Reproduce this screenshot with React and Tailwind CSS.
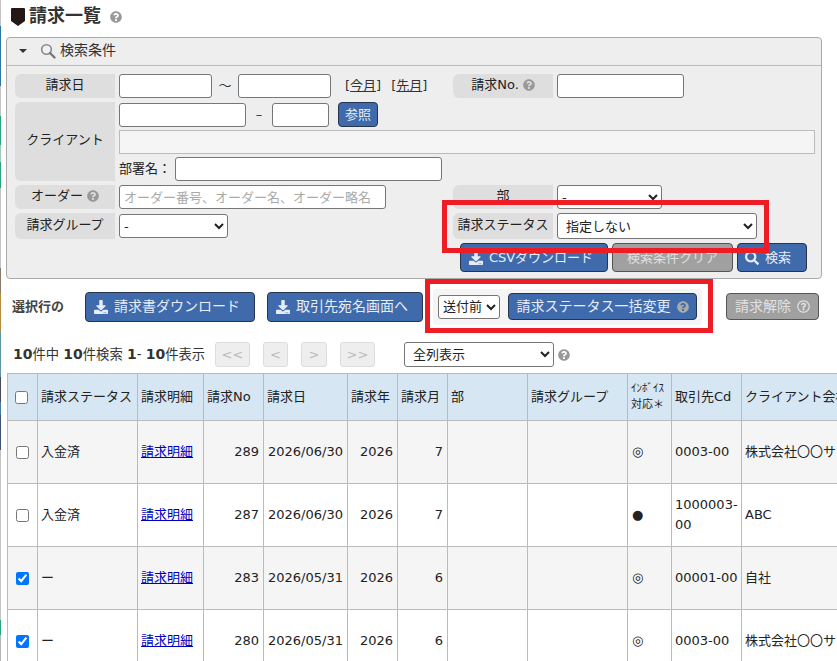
import { FaQuestionCircle, FaRegQuestionCircle, FaDownload, FaSearch } from 'react-icons/fa';

const FONT = "font-['DejaVu_Sans','Noto_Sans_CJK_JP',sans-serif]";

const STRIP = [
  ['h-[26px]', 'bg-[#c4c4c4]'],
  ['h-[60px]', 'bg-[#2b76a8]'],
  ['h-[30px]', 'bg-[#c4c4c4]'],
  ['h-[29px]', 'bg-[#2aa578]'],
  ['h-[17px]', 'bg-[#9fcdb8]'],
  ['h-[26px]', 'bg-[#2aa578]'],
  ['h-[80px]', 'bg-[#c4c4c4]'],
  ['h-[25px]', 'bg-[#8a7a6a]'],
  ['h-[39px]', 'bg-[#b58a3e]'],
  ['h-[45px]', 'bg-[#5f93a8]'],
  ['h-[25px]', 'bg-[#4a4a52]'],
  ['h-[13px]', 'bg-[#4a7ba0]'],
  ['h-[35px]', 'bg-[#3f5275]'],
  ['h-[170px]', 'bg-[#c4c4c4]'],
  ['h-[15px]', 'bg-[#2aa578]'],
  ['h-[26px]', 'bg-[#b4b4b4]'],
];

const COLS = [30, 100, 66, 60, 84, 50, 50, 80, 100, 44, 70, 200];

const ROWS = [
  { checked: false, status: '入金済', no: '289', date: '2026/06/30', year: '2026', month: '7', mark: '◎', cd: '0003-00', client: '株式会社〇〇サービス' },
  { checked: false, status: '入金済', no: '287', date: '2026/06/30', year: '2026', month: '7', mark: '●', cd: '1000003-00', client: 'ABC' },
  { checked: true, status: 'ー', no: '283', date: '2026/05/31', year: '2026', month: '6', mark: '◎', cd: '00001-00', client: '自社' },
  { checked: true, status: 'ー', no: '280', date: '2026/05/31', year: '2026', month: '6', mark: '◎', cd: '0003-00', client: '株式会社〇〇サービス' },
];

const Label = ({ className = 'h-[24px]', children }) => (
  <div className={`w-[100px] shrink-0 bg-[#dedede] rounded-l-[6px] flex items-center justify-center gap-1 pb-[3px] text-[13px] text-[#222] ${className}`}>
    {children}
  </div>
);

const Input = ({ className = '', disabled, ...props }) => (
  <input
    disabled={disabled}
    className={`h-[24px] border text-[13px] px-1 ${disabled ? 'bg-[#f5f5f5] border-[#bbbbbb]' : 'bg-white border-[#767676] rounded-[3px]'} ${className}`}
    {...props}
  />
);

const Select = ({ className = '', children }) => (
  <select className={`bg-white border border-[#767676] rounded-[3px] text-[13px] text-[#222] ${className}`}>
    {children}
  </select>
);

const Button = ({ gray, className = '', children }) => (
  <button className={`flex items-center justify-center gap-[6px] border rounded-[4px] ${gray ? 'bg-[#a0a0a0] border-[#555555] text-[#e0e0e0]' : 'bg-[#3f6aac] border-[#26344d] text-[#e6edf7]'} ${className}`}>
    {children}
  </button>
);

const PageButton = ({ className = '', children }) => (
  <button className={`h-[25px] bg-[#eeeeee] border border-[#dddddd] rounded-[3px] text-[#bbbbbb] text-[13px] ${className}`}>
    {children}
  </button>
);

const Th = ({ children }) => (
  <th className="border border-[#bbbbbb] pl-[3px] pr-1 font-normal text-left text-[13px] text-[#222]">{children}</th>
);

const Td = ({ className = 'pl-[3px] pr-[3px]', children }) => (
  <td className={`border border-[#bbbbbb] text-[13px] leading-[20px] text-[#222] ${className}`}>{children}</td>
);

const App = () => {
  return (
    <div className={`w-[837px] h-[661px] overflow-hidden flex bg-white ${FONT}`}>
      <div className="w-[1px] shrink-0 flex flex-col">
        {STRIP.map(([h, bg], i) => (
          <div key={i} className={`${h} ${bg}`} />
        ))}
      </div>

      <div className="relative flex-1 min-w-0">
        {/* title */}
        <div className="h-[37px] flex items-start pl-[10px] pt-[4px]">
          <svg width="14" height="18" viewBox="0 0 14 18" className="mt-[4px]">
            <path d="M1 0h12a1 1 0 0 1 1 1v12l-7 5-7-5V1a1 1 0 0 1 1-1z" fill="#231815" />
          </svg>
          <h1 className="ml-[4px] text-[18px] leading-[24px] font-bold text-[#333]">請求一覧</h1>
          <FaQuestionCircle className="ml-[9px] mt-[7px] text-[12px] text-[#999]" />
        </div>

        {/* search panel */}
        <div className="ml-[5px] w-[816px] h-[242px] border border-[#aaaaaa] rounded-[4px] bg-[#eeeeee]">
          <div className="h-[28px] flex items-center border-b border-[#bbbbbb] pl-[12px] pb-[2px]">
            <div className="w-0 h-0 border-x-[4px] border-x-transparent border-t-[4px] border-t-[#333]" />
            <svg width="16" height="16" viewBox="0 0 16 16" className="ml-[13px]">
              <circle cx="6.5" cy="6.5" r="4.8" fill="#eef2f4" stroke="#888" strokeWidth="1.6" />
              <path d="M10 10l4.5 4.5" stroke="#777" strokeWidth="2.4" strokeLinecap="round" />
            </svg>
            <span className="ml-[4px] text-[14px] text-[#333]">検索条件</span>
          </div>

          <div className="pl-[8px] pt-[8px] flex flex-col gap-[4px]">
            <div className="flex items-center">
              <div className="w-[438px] flex items-center">
                <Label>請求日</Label>
                <Input className="ml-[4px] w-[93px]" />
                <span className="w-[26px] text-center text-[13px] text-[#333]">～</span>
                <Input className="w-[93px]" />
                <span className="ml-[14px] text-[13px] text-[#333]">[<u>今月</u>]</span>
                <span className="ml-[10px] text-[13px] text-[#333]">[<u>先月</u>]</span>
              </div>
              <Label>
                請求No.
                <FaQuestionCircle className="text-[12px] text-[#999]" />
              </Label>
              <Input className="ml-[4px] w-[127px]" />
            </div>

            <div className="flex">
              <Label className="h-[79px]">クライアント</Label>
              <div className="ml-[4px] flex flex-col">
                <div className="flex items-center h-[25px]">
                  <Input className="w-[127px]" />
                  <span className="w-[26px] text-center text-[13px] text-[#333]">–</span>
                  <Input className="w-[57px]" />
                  <Button className="ml-[9px] w-[40px] h-[25px] text-[13px]">参照</Button>
                </div>
                <Input disabled className="mt-[3px] w-[696px]" />
                <div className="mt-[3px] flex items-center">
                  <span className="w-[56px] text-[13px] text-[#222]">部署名：</span>
                  <Input className="w-[267px]" />
                </div>
              </div>
            </div>

            <div className="flex items-center">
              <div className="w-[438px] flex items-center">
                <Label>
                  オーダー
                  <FaQuestionCircle className="text-[12px] text-[#999]" />
                </Label>
                <Input
                  className="ml-[4px] w-[267px] placeholder:text-[#aaaaaa]"
                  placeholder="オーダー番号、オーダー名、オーダー略名"
                />
              </div>
              <Label>部</Label>
              <Select className="ml-[4px] w-[105px] h-[24px]"><option>-</option></Select>
            </div>

            <div className="flex items-center">
              <div className="w-[438px] flex items-center">
                <Label className="h-[26px]">請求グループ</Label>
                <Select className="ml-[4px] w-[109px] h-[24px]"><option>-</option></Select>
              </div>
              <Label className="h-[26px]">請求ステータス</Label>
              <Select className="ml-[4px] w-[200px] h-[26px] pl-1"><option>指定しない</option></Select>
            </div>

            <div className="flex justify-end gap-[4px] pr-[14px]">
              <Button className="w-[148px] h-[29px] text-[13px] pr-[6px]">
                <FaDownload className="text-[14px]" />
                CSVダウンロード
              </Button>
              <Button gray className="w-[121px] h-[29px] text-[13px]">検索条件クリア</Button>
              <Button className="w-[70px] h-[29px] text-[13px] pr-[8px]">
                <FaSearch className="text-[14px]" />
                検索
              </Button>
            </div>
          </div>
        </div>

        {/* bulk actions */}
        <div className="h-[61px] flex items-center pl-[11px] pb-[6px]">
          <span className="w-[73px] text-[13px] font-bold text-[#444]">選択行の</span>
          <Button className="w-[170px] h-[30px] text-[14px] pr-[6px]">
            <FaDownload className="text-[14px]" />
            請求書ダウンロード
          </Button>
          <Button className="ml-[12px] w-[156px] h-[30px] text-[14px] pr-[6px]">
            <FaDownload className="text-[14px]" />
            取引先宛名画面へ
          </Button>
          <div className="ml-[10px] w-[269px] h-[36px] bg-[#f5f5f5] rounded-[4px] flex items-center pl-[5px]">
            <Select className="w-[62px] h-[24px]"><option>送付前</option></Select>
            <Button className="ml-[8px] w-[189px] h-[27px] text-[14px] gap-[5px]">
              請求ステータス一括変更
              <FaQuestionCircle className="text-[12px] text-[#aaa]" />
            </Button>
          </div>
          <Button gray className="ml-[24px] w-[93px] h-[27px] text-[14px] gap-[5px]">
            請求解除
            <FaRegQuestionCircle className="text-[13px]" />
          </Button>
        </div>

        {/* pagination */}
        <div className="h-[33px] flex items-center pl-[12px] pb-[4px]">
          <span className="w-[202px] text-[13.3px] text-[#333] whitespace-nowrap">
            <b className="text-[14px]">10</b>件中 <b className="text-[14px]">10</b>件検索 <b className="text-[14px]">1</b>- <b className="text-[14px]">10</b>件表示
          </span>
          <PageButton className="w-[35px]">&lt;&lt;</PageButton>
          <PageButton className="ml-[13px] w-[25px]">&lt;</PageButton>
          <PageButton className="ml-[13px] w-[26px]">&gt;</PageButton>
          <PageButton className="ml-[13px] w-[35px]">&gt;&gt;</PageButton>
          <Select className="ml-[29px] w-[150px] h-[25px] pl-1"><option>全列表示</option></Select>
          <FaQuestionCircle className="ml-[4px] text-[12px] text-[#999]" />
        </div>

        {/* table */}
        <table className="ml-[6px] table-fixed border-collapse w-[934px]">
          <colgroup>
            {COLS.map((w, i) => (
              <col key={i} style={{ width: w }} />
            ))}
          </colgroup>
          <thead>
            <tr className="h-[47px] bg-[#d6e6f3]">
              <Th><input type="checkbox" className="block ml-[4px]" /></Th>
              <Th>請求ステータス</Th>
              <Th>請求明細</Th>
              <Th>請求No</Th>
              <Th>請求日</Th>
              <Th>請求年</Th>
              <Th>請求月</Th>
              <Th>部</Th>
              <Th>請求グループ</Th>
              <Th>
                <div className="text-[11px] leading-[16px] whitespace-nowrap">ｲﾝﾎﾞｲｽ<br />対応＊</div>
              </Th>
              <Th>取引先Cd</Th>
              <Th><span className="whitespace-nowrap">クライアント会社名</span></Th>
            </tr>
          </thead>
          <tbody>
            {ROWS.map((r, i) => (
              <tr key={r.no} className={`h-[63px] ${i % 2 === 0 ? 'bg-[#f5f5f5]' : 'bg-white'}`}>
                <Td><input type="checkbox" defaultChecked={r.checked} className="block ml-[5px]" /></Td>
                <Td>{r.status}</Td>
                <Td><a href="#" className="text-[#0000c0] underline">請求明細</a></Td>
                <Td className="text-right pr-1">{r.no}</Td>
                <Td className="pl-[4px] whitespace-nowrap">{r.date}</Td>
                <Td className="text-right pr-1">{r.year}</Td>
                <Td className="text-right pr-1">{r.month}</Td>
                <Td />
                <Td />
                <Td className="pl-[4px] text-[11px]">{r.mark}</Td>
                <Td>{r.cd}</Td>
                <Td><span className="whitespace-nowrap">{r.client}</span></Td>
              </tr>
            ))}
          </tbody>
        </table>

        {/* red annotations over the screenshot */}
        <div className="absolute left-[441px] top-[200px] w-[327px] h-[53px] border-[5px] border-[#ee1c25]" />
        <div className="absolute left-[424px] top-[279px] w-[288px] h-[54px] border-[5px] border-[#ee1c25]" />
      </div>
    </div>
  );
};

export default App;
